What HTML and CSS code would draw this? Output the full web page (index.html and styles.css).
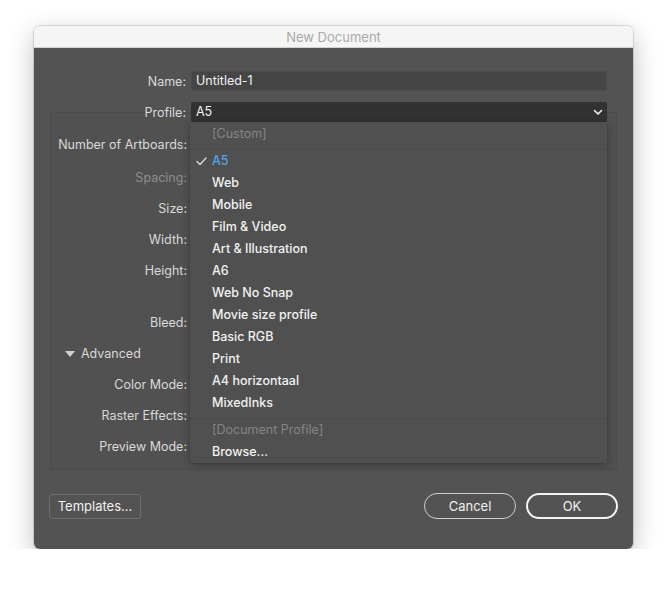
FILE: index.html
```html
<!DOCTYPE html>
<html>
<head>
<meta charset="utf-8">
<link rel="stylesheet" href="styles.css">
<title>New Document</title>
</head>
<body>
<div class="window">
  <div class="titlebar">New Document</div>
  <div class="content">
    <div class="field-row name-row">
      <div class="flabel">Name:</div>
      <div class="input">Untitled-1</div>
    </div>
    <div class="field-row profile-row">
      <div class="flabel">Profile:</div>
      <div class="select">A5
        <svg class="chev" width="10" height="7" viewBox="0 0 10 7"><path d="M1.5 1.5 L5 5 L8.5 1.5" fill="none" stroke="#f2f2f2" stroke-width="1.6" stroke-linecap="round" stroke-linejoin="round"/></svg>
      </div>
    </div>
    <div class="panel">
      <div class="row first"><span class="plabel">Number of Artboards:</span></div>
      <div class="row"><span class="plabel dim">Spacing:</span></div>
      <div class="row"><span class="plabel">Size:</span></div>
      <div class="row"><span class="plabel">Width:</span></div>
      <div class="row"><span class="plabel">Height:</span></div>
      <div class="row gap"><span class="plabel">Bleed:</span></div>
      <div class="row adv"><span class="tri"></span>Advanced</div>
      <div class="row"><span class="plabel">Color Mode:</span></div>
      <div class="row"><span class="plabel">Raster Effects:</span></div>
      <div class="row"><span class="plabel">Preview Mode:</span></div>
    </div>
    <div class="footer">
      <div class="btn templates">Templates...</div>
      <div class="spacer"></div>
      <div class="btn pill">Cancel</div>
      <div class="btn pill ok">OK</div>
    </div>
    <div class="menu">
      <div class="item disabled">[Custom]</div>
      <div class="sep"></div>
      <div class="item selected"><svg class="check" width="11" height="9" viewBox="0 0 11 9"><path d="M1 4.6 L4 7.5 L10 1" fill="none" stroke="#d8d8d8" stroke-width="1.4" stroke-linecap="round" stroke-linejoin="round"/></svg>A5</div>
      <div class="item">Web</div>
      <div class="item">Mobile</div>
      <div class="item">Film &amp; Video</div>
      <div class="item">Art &amp; Illustration</div>
      <div class="item">A6</div>
      <div class="item">Web No Snap</div>
      <div class="item">Movie size profile</div>
      <div class="item">Basic RGB</div>
      <div class="item">Print</div>
      <div class="item">A4 horizontaal</div>
      <div class="item">MixedInks</div>
      <div class="sep"></div>
      <div class="item disabled">[Document Profile]</div>
      <div class="item">Browse...</div>
    </div>
  </div>
</div>
</body>
</html>
```
FILE: styles.css
```css
* { box-sizing: border-box; }
html, body { margin: 0; padding: 0; background: #ffffff; }
body {
  font-family: Inter, "Open Sans", "Liberation Sans", sans-serif;
  font-size: 12.5px;
  padding: 26px 0 0 34px;
}
.window {
  width: 599px;
  height: 523px;
  border-radius: 6px;
  overflow: hidden;
  box-shadow: 0 8px 26px rgba(0,0,0,0.26), 0 0 0 1px rgba(0,0,0,0.12);
  display: flex;
  flex-direction: column;
}
.titlebar {
  height: 22px;
  line-height: 22px;
  background: #f5f5f5;
  border-bottom: 1px solid #d2d2d2;
  color: #a9a9a9;
  text-align: center;
  font-size: 13px;
}
.content {
  position: relative;
  flex: 1;
  background: #535353;
  padding: 23px 26px 0 0;
  color: #d9d9d9;
}
.field-row {
  display: flex;
  align-items: center;
  height: 20px;
}
.profile-row { margin-top: 11px; }
.flabel {
  width: 157px;
  text-align: right;
  padding-right: 5px;
  flex: none;
}
.input {
  flex: 1;
  height: 20px;
  line-height: 18px;
  background: #454545;
  border: 1px solid #4c4c4c;
  border-radius: 2px;
  padding-left: 4px;
  color: #f2f2f2;
}
.select {
  flex: 1;
  height: 20px;
  line-height: 20px;
  background: #323232;
  border-radius: 2px;
  padding-left: 5px;
  color: #f2f2f2;
  display: flex;
  justify-content: space-between;
  align-items: center;
}
.chev { margin-right: 4px; }
.panel {
  margin: -10px 0 0 16px;
  width: 567px;
  height: 358px;
  border: 1px solid #4b4b4b;
  background: #515151;
  border-radius: 2px;
  padding-top: 16px;
}
.row {
  height: 31px;
  line-height: 31px;
}
.row.first { margin-bottom: 2px; }
.row.gap { margin-top: 21px; }
.plabel {
  display: block;
  width: 136px;
  text-align: right;
}
.dim { color: #8e8e8e; }
.adv {
  height: 31px;
  line-height: 31px;
  padding-left: 14px;
  display: flex;
  align-items: center;
}
.tri {
  width: 0; height: 0;
  border-left: 5px solid transparent;
  border-right: 5px solid transparent;
  border-top: 6px solid #d0d0d0;
  margin-right: 6px;
}
.footer {
  display: flex;
  align-items: center;
  margin-top: 23px;
  padding-left: 15px;
  margin-right: -11px;
  gap: 10px;
}
.spacer { flex: 1; }
.btn {
  width: 92px;
  height: 26px;
  display: flex;
  align-items: center;
  justify-content: center;
  color: #f0f0f0;
  font-size: 13px;
}
.templates {
  border: 1px solid #6e6e6e;
  border-radius: 3px;
  height: 25px;
}
.pill {
  border: 1px solid #cfcfcf;
  border-radius: 13px;
}
.ok { border: 2px solid #f4f4f4; }
.menu {
  position: absolute;
  left: 156px;
  top: 74px;
  width: 417px;
  height: 341px;
  background: #505050;
  padding-top: 1px;
  box-shadow: 0 3px 10px rgba(0,0,0,0.22), 0 0 0 1px rgba(0,0,0,0.06);
  border-radius: 0 0 3px 3px;
}
.item {
  position: relative;
  height: 22px;
  line-height: 22px;
  padding-left: 22px;
  color: #f2f2f2;
  font-weight: 500;
}
.item.disabled { color: #858585; font-weight: 400; }
.item.selected { color: #52a5ec; }
.check { position: absolute; left: 6px; top: 7px; }
.sep {
  height: 5px;
  border-bottom: 1px solid #4a4a4a;
}
```
